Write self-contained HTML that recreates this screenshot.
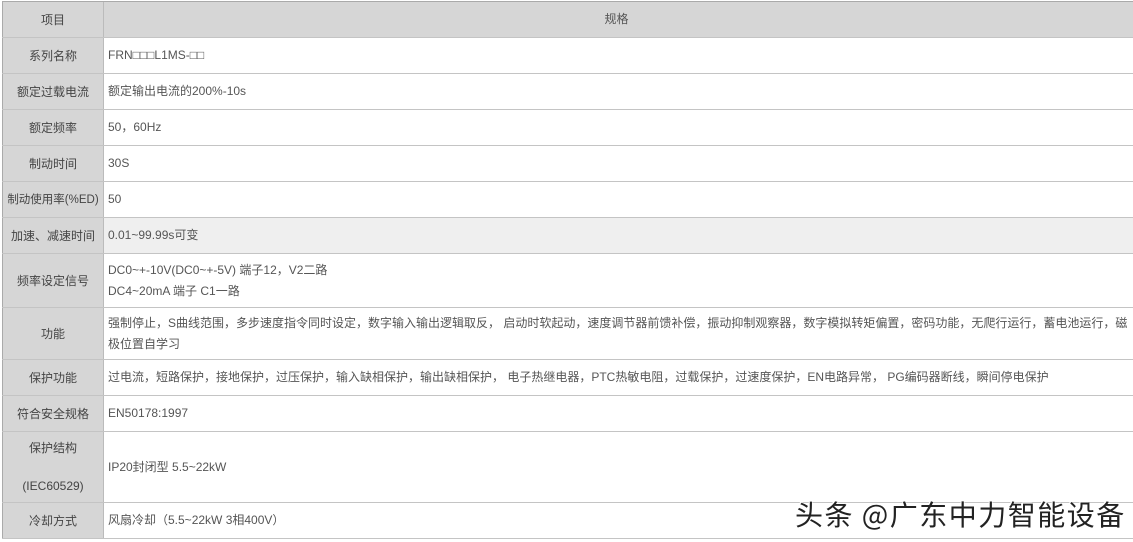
<!DOCTYPE html>
<html><head><meta charset="utf-8"><style>
body{margin:0;width:1133px;height:542px;background:#fff;position:relative;overflow:hidden;font-family:"Liberation Sans","Noto Sans CJK SC",sans-serif;font-size:12px;color:#555}
.r{position:absolute;left:2px;width:1131px;border-bottom:1px solid #c4c4c4;box-sizing:border-box}
.l{position:absolute;left:0;top:0;bottom:0;width:102px;background:#d6d6d6;border-right:1px solid #bbb;border-left:1px solid #aaa;display:flex;align-items:center;justify-content:center;text-align:center;color:#444;box-sizing:border-box;line-height:38px}
.v{position:absolute;left:106px;right:4px;top:0;bottom:0;display:flex;align-items:center;line-height:21px}
.wm{position:absolute;left:795px;top:494px;font-size:28px;color:#222;font-family:"Noto Sans CJK SC",sans-serif;text-shadow:1px 1px 0 #fff,-1px -1px 0 #fff;letter-spacing:1.5px}
</style></head><body>
<div class="r" style="top:1px;height:37px;background:#d6d6d6;border-top:1px solid #aaa"><div class="l">项目</div><div class="v" style="justify-content:center;left:102px">规格</div></div>
<div class="r" style="top:38px;height:36px"><div class="l">系列名称</div><div class="v">FRN□□□L1MS-□□</div></div>
<div class="r" style="top:74px;height:36px"><div class="l">额定过载电流</div><div class="v">额定输出电流的200%-10s</div></div>
<div class="r" style="top:110px;height:36px"><div class="l">额定频率</div><div class="v">50，60Hz</div></div>
<div class="r" style="top:146px;height:36px"><div class="l">制动时间</div><div class="v">30S</div></div>
<div class="r" style="top:182px;height:36px"><div class="l" style="white-space:nowrap;font-size:11.5px">制动使用率(%ED)</div><div class="v">50</div></div>
<div class="r" style="top:218px;height:36px;background:#efefef"><div class="l">加速、减速时间</div><div class="v">0.01~99.99s可变</div></div>
<div class="r" style="top:254px;height:54px"><div class="l">频率设定信号</div><div class="v">DC0~+-10V(DC0~+-5V) 端子12，V2二路<br>DC4~20mA 端子 C1一路</div></div>
<div class="r" style="top:308px;height:52px"><div class="l">功能</div><div class="v">强制停止，S曲线范围，多步速度指令同时设定，数字输入输出逻辑取反， 启动时软起动，速度调节器前馈补偿，振动抑制观察器，数字模拟转矩偏置，密码功能，无爬行运行，蓄电池运行，磁极位置自学习</div></div>
<div class="r" style="top:360px;height:36px"><div class="l">保护功能</div><div class="v">过电流，短路保护，接地保护，过压保护，输入缺相保护，输出缺相保护， 电子热继电器，PTC热敏电阻，过载保护，过速度保护，EN电路异常， PG编码器断线，瞬间停电保护</div></div>
<div class="r" style="top:396px;height:36px"><div class="l">符合安全规格</div><div class="v">EN50178:1997</div></div>
<div class="r" style="top:432px;height:71px"><div class="l">保护结构<br>(IEC60529)</div><div class="v">IP20封闭型 5.5~22kW</div></div>
<div class="r" style="top:503px;height:36px"><div class="l">冷却方式</div><div class="v">风扇冷却（5.5~22kW 3相400V）</div></div>
<div class="wm">头条 @广东中力智能设备</div>
</body></html>
